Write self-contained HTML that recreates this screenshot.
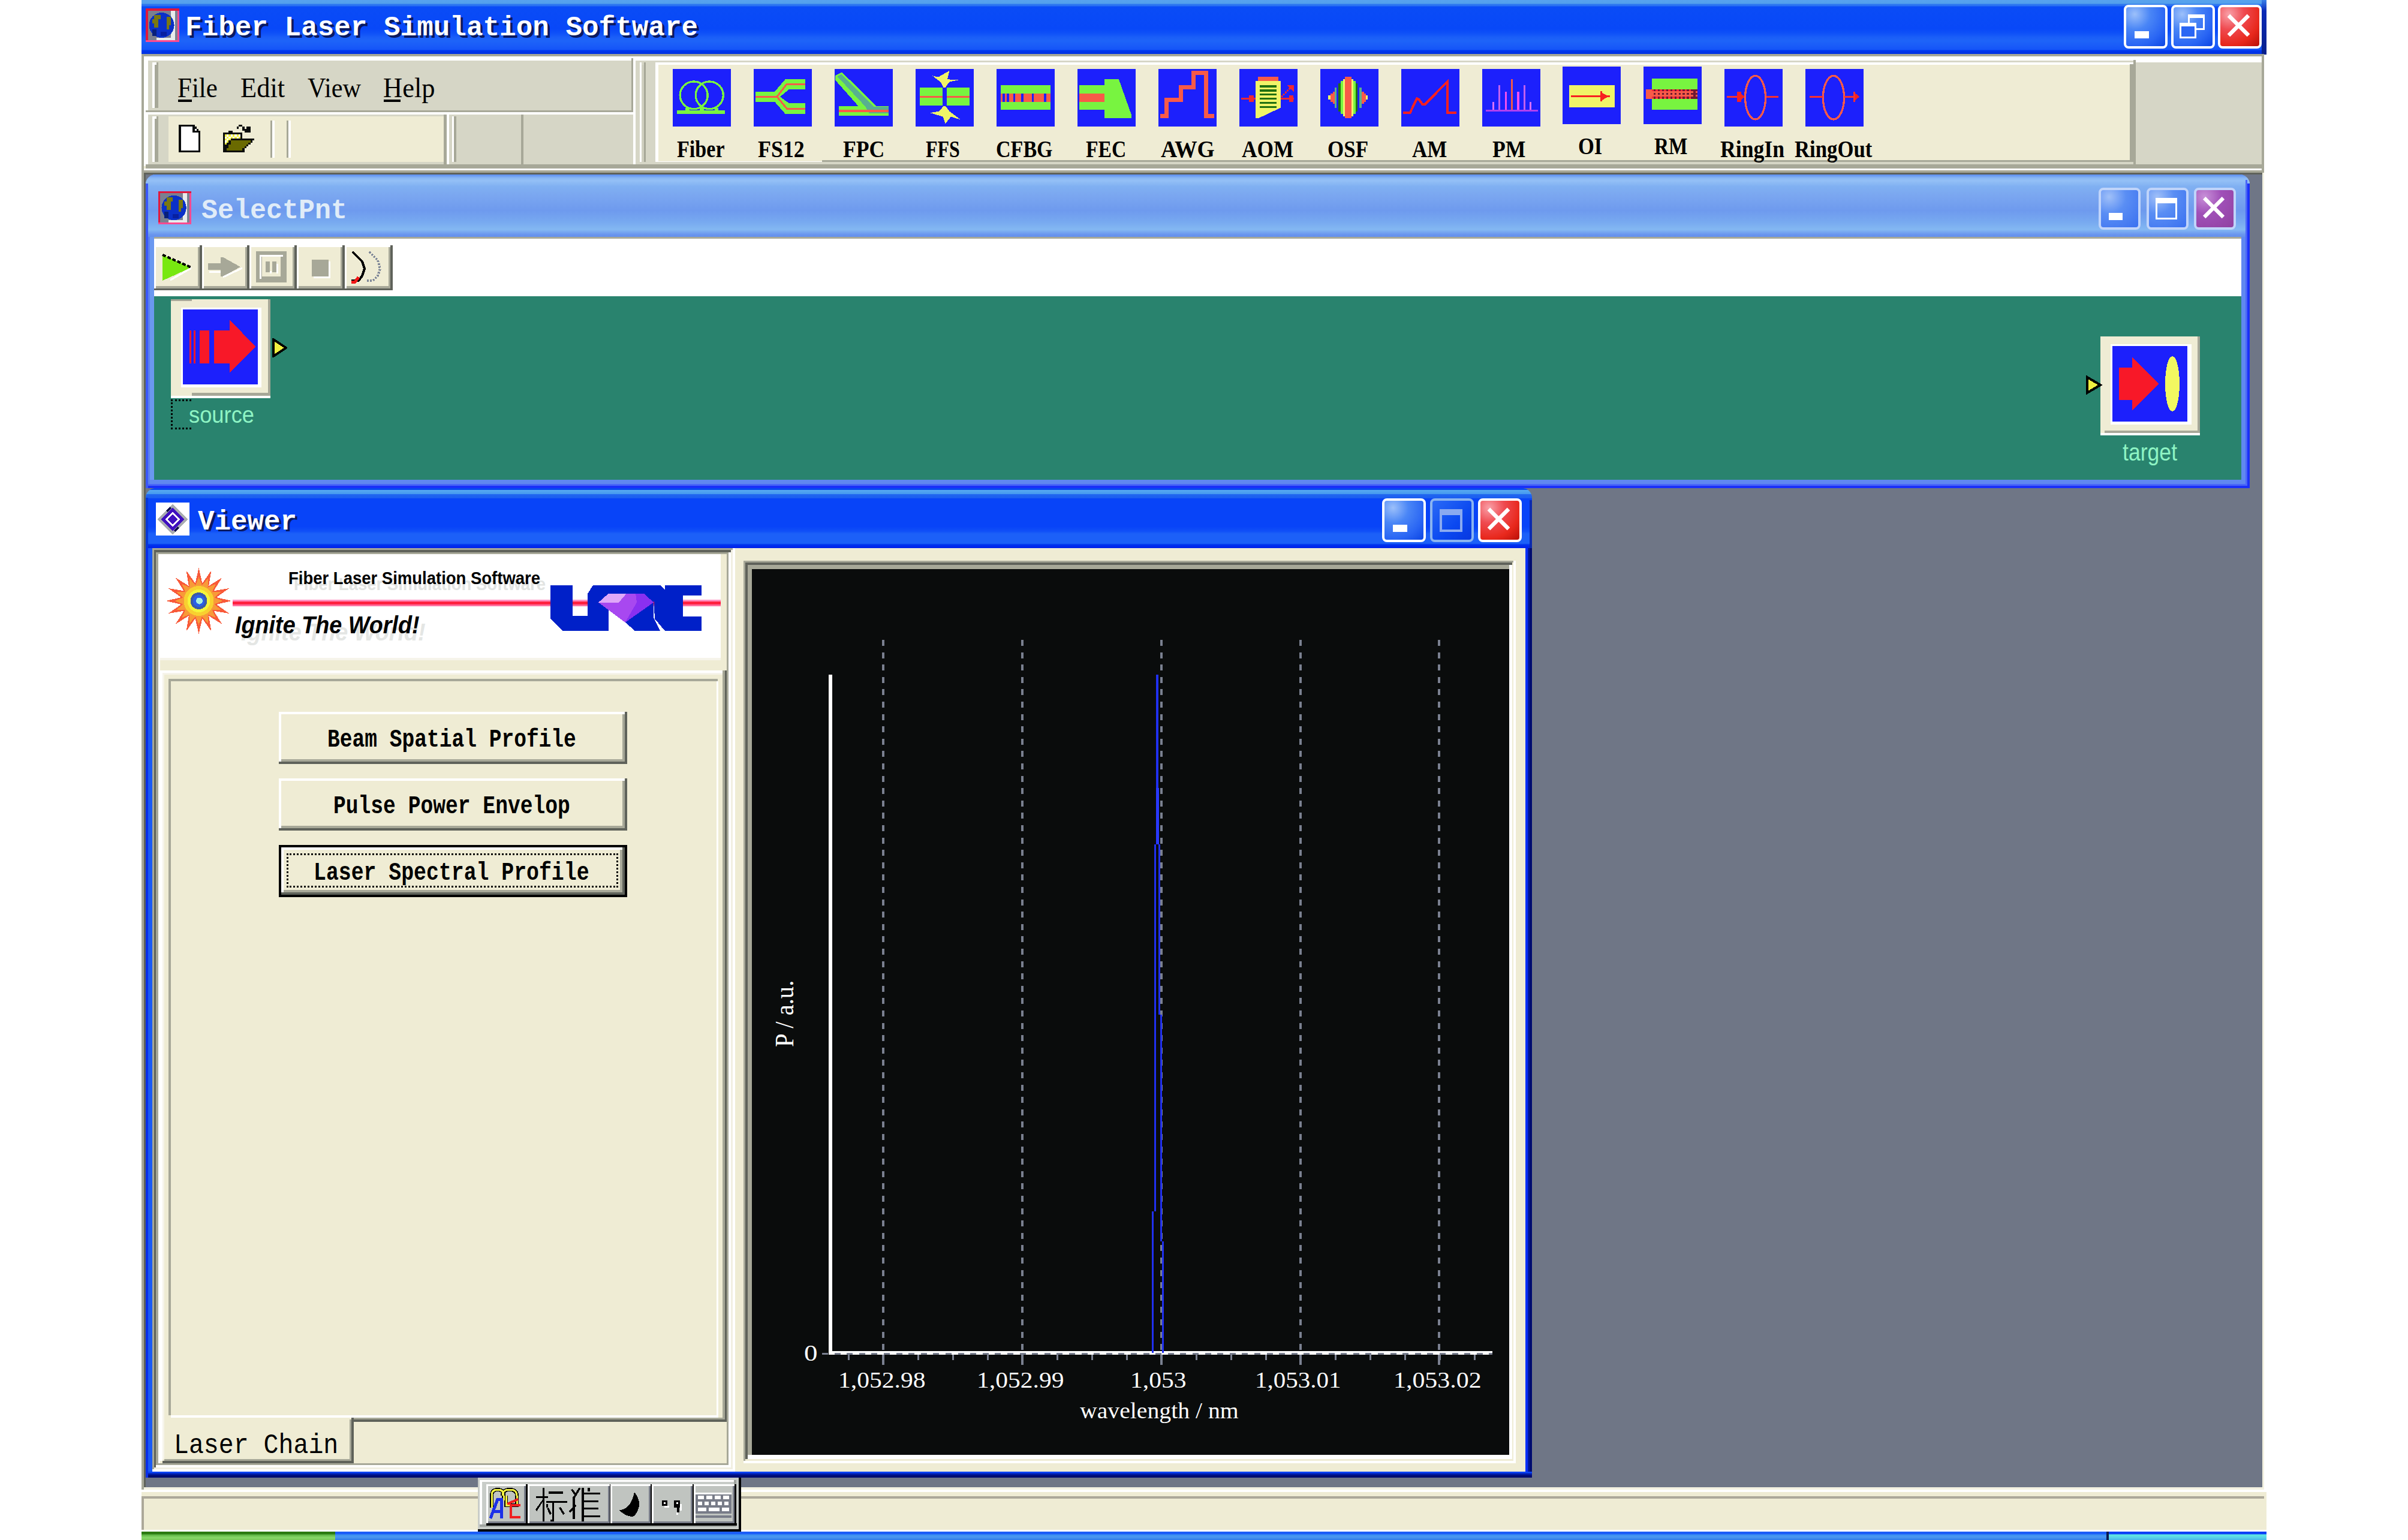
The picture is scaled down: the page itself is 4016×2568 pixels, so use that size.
<!DOCTYPE html>
<html><head><meta charset="utf-8"><style>*{margin:0;padding:0;box-sizing:border-box}
html,body{width:4016px;height:2568px;overflow:hidden;background:#fff;position:relative}
div,svg{position:absolute}
svg{shape-rendering:crispEdges}
</style></head><body>
<div style="left:236px;top:0px;width:3544px;height:91px;background:linear-gradient(to bottom,#58a2ee 0px,#52a0ec 6px,#2e78f0 7px,#2a70f2 10px,#0a4cf6 11px,#0848f8 48px,#0e50f8 55px,#1a5ef8 62px,#1e64f8 68px,#1a5cf8 76px,#1454f8 83px,#0038f0 84px,#0034e8 87px,#0030e0 91px);"></div>
<div style="left:3772px;top:0px;width:8px;height:91px;background:linear-gradient(to bottom,#3a80e8,#0a2ab8 20%,#08208a);"></div>
<svg style="left:243px;top:14px" width="56" height="56" viewBox="0 0 16 16"><rect x="0" y="0" width="16" height="16" fill="#e0183c"/><rect x="1" y="1" width="14" height="14" fill="#7a8090"/>
<path d="M12 1h2v14h-9v-1h7z" fill="#e8ecec"/><rect x="15" y="1" width="1" height="15" fill="#ff4a90"/><rect x="0" y="15" width="16" height="1" fill="#ff4a90"/>
<circle cx="7.6" cy="8" r="6" fill="#0a30c8"/><path d="M4 3h3v2h-1v4h-2v-2h-1v-2h1z" fill="#7a7810"/><path d="M10 4h2v4h-1v2h-1z" fill="#7a7810"/><path d="M3 10h2v3h-2z" fill="#08207a"/><path d="M7 11h3v2h-3z" fill="#0820a0"/></svg>
<div style="transform:scaleX(0.9770);left:309.07px;top:22.94px;font-family:'Liberation Mono',monospace;font-size:47.06px;line-height:47.06px;font-weight:bold;color:#fff;white-space:pre;transform-origin:0 0;text-shadow:4px 4px 0 #0a1a60;">Fiber Laser Simulation Software</div>
<div style="left:3542px;top:8px;width:73px;height:73px;border:4px solid #fff;border-radius:8px;background:radial-gradient(circle at 22% 18%,#9cc0fa 0%,#4a86f6 35%,#2a66f4 70%,#0c46e4 100%)"></div>
<div style="left:3560px;top:52px;width:24px;height:12px;background:#fff;"></div>
<div style="left:3621px;top:8px;width:73px;height:73px;border:4px solid #fff;border-radius:8px;background:radial-gradient(circle at 22% 18%,#9cc0fa 0%,#4a86f6 35%,#2a66f4 70%,#0c46e4 100%)"></div>
<div style="left:3649px;top:24px;width:28px;height:26px;border:3px solid #fff;border-top-width:6px"></div>
<div style="left:3635px;top:38px;width:28px;height:26px;border:3px solid #fff;border-top-width:6px;background:#2a66f4"></div>
<div style="left:3699px;top:8px;width:73px;height:73px;border:4px solid #fff;border-radius:8px;background:radial-gradient(circle at 22% 18%,#f9a0a8 0%,#ef4a50 35%,#e8281c 70%,#b81008 100%)"></div>
<svg style="left:3699px;top:8px" width="73" height="73" viewBox="0 0 72 72"><path d="M20 20 L48 48 M48 20 L20 48" stroke="#fff" stroke-width="6.5" stroke-linecap="square" fill="none" style="shape-rendering:auto"/></svg>
<div style="left:236px;top:90px;width:3540px;height:2394px;background:#efecd4;"></div>
<div style="left:236px;top:90px;width:4px;height:2394px;background:#a7a898;"></div>
<div style="left:236px;top:90px;width:3540px;height:4px;background:#a7a898;"></div>
<div style="left:240px;top:94px;width:3532px;height:7px;background:#fff;"></div>
<div style="left:240px;top:94px;width:7px;height:183px;background:#fff;"></div>
<div style="left:3773px;top:287px;width:3px;height:2197px;background:#f2f0e0;"></div>
<div style="left:247px;top:101px;width:807px;height:84px;background:#d6d6c6;"></div>
<div style="left:243px;top:184px;width:813px;height:3px;background:#a7a898;"></div>
<div style="left:1053px;top:97px;width:3px;height:91px;background:#a7a898;"></div>
<div style="left:1056px;top:94px;width:4px;height:183px;background:#fff;"></div>
<div style="left:240px;top:187px;width:816px;height:4px;background:#fff;"></div>
<div style="left:254px;top:104px;width:4px;height:76px;background:#fff;"></div>
<div style="left:258px;top:104px;width:6px;height:76px;background:#a7a898;"></div>
<div style="left:258px;top:104px;width:3px;height:4px;background:#fff;"></div>
<div style="transform:scaleX(0.9076);left:296.09px;top:123.35px;font-family:'Liberation Serif',serif;font-size:47.34px;line-height:47.34px;font-weight:normal;color:#000;white-space:pre;transform-origin:0 0;">File</div>
<div style="transform:scaleX(0.9392);left:401.06px;top:123.35px;font-family:'Liberation Serif',serif;font-size:47.34px;line-height:47.34px;font-weight:normal;color:#000;white-space:pre;transform-origin:0 0;">Edit</div>
<div style="transform:scaleX(0.8945);left:513.00px;top:123.35px;font-family:'Liberation Serif',serif;font-size:47.34px;line-height:47.34px;font-weight:normal;color:#000;white-space:pre;transform-origin:0 0;">View</div>
<div style="transform:scaleX(0.9403);left:639.06px;top:123.35px;font-family:'Liberation Serif',serif;font-size:47.34px;line-height:47.34px;font-weight:normal;color:#000;white-space:pre;transform-origin:0 0;">Help</div>
<div style="left:297px;top:166px;width:23px;height:4px;background:#000;"></div>
<div style="left:640px;top:166px;width:28px;height:4px;background:#000;"></div>
<div style="left:247px;top:191px;width:809px;height:83px;background:#d6d6c6;"></div>
<div style="left:281px;top:194px;width:459px;height:76px;background:#efecd4;"></div>
<div style="left:254px;top:194px;width:4px;height:76px;background:#fff;"></div>
<div style="left:258px;top:194px;width:6px;height:76px;background:#a7a898;"></div>
<div style="left:258px;top:194px;width:3px;height:4px;background:#fff;"></div>
<div style="left:740px;top:191px;width:5px;height:83px;background:#a7a898;"></div>
<div style="left:745px;top:191px;width:4px;height:83px;background:#fff;"></div>
<div style="left:754px;top:194px;width:3px;height:76px;background:#fff;"></div>
<div style="left:757px;top:194px;width:4px;height:76px;background:#a7a898;"></div>
<div style="left:869px;top:191px;width:4px;height:83px;background:#a7a898;"></div>
<svg style="left:298px;top:208px" width="40" height="46" viewBox="0 0 12 14"><path d="M0 0 H8 V1 H9 V2 H10 V3 H11 V14 H0 Z" fill="#0a0c0c"/><path d="M1 1 H7 V4 H10 V13 H1 Z" fill="#fff"/><rect x="8" y="2" width="1" height="1" fill="#fff"/></svg>
<svg style="left:371px;top:208px" width="57" height="46" viewBox="0 0 17 14"><path d="M1 4 H3 V3 H5 V4 H10 V7 H16 V8 H15 V9 H14 V10 H13 V11 H12 V12 H11 V14 H0 V4 Z" fill="#0a0c0c"/>
<path d="M1 5 H9 V7 H4 V8 H3 V9 H2 V10 H1 Z" fill="#f0f040"/><path d="M2 5 H3 V6 H2 Z M4 5 H5 V6 H4 Z M6 5 H7 V6 H6 Z M8 5 H9 V6 H8 Z M1 6 H2 V7 H1 Z M3 6 H4 V7 H3 Z M5 6 H6 V7 H5 Z M7 6 H8 V7 H7 Z M2 7 H3 V8 H2 Z M1 8 H2 V9 H1 Z" fill="#fff"/>
<path d="M4 8 H14 V9 H13 V10 H12 V11 H11 V12 H10 V13 H2 V12 H3 V10 H4 Z" fill="#6a6a00"/><path d="M8 0 H10 V1 H11 V2 H12 V1 H14 V4 H11 V3 H10 V1 H8 V2 H7 V1 H8 Z" fill="#0a0c0c"/></svg>
<div style="left:451px;top:201px;width:3px;height:62px;background:#a7a898;"></div>
<div style="left:454px;top:201px;width:4px;height:62px;background:#fff;"></div>
<div style="left:478px;top:201px;width:3px;height:62px;background:#a7a898;"></div>
<div style="left:481px;top:201px;width:4px;height:62px;background:#fff;"></div>
<div style="left:243px;top:274px;width:3530px;height:7px;background:#a7a898;"></div>
<div style="left:240px;top:281px;width:3533px;height:3px;background:#fff;"></div>
<div style="left:240px;top:284px;width:3533px;height:4px;background:#a7a898;"></div>
<div style="left:240px;top:288px;width:3533px;height:3px;background:#5f625a;"></div>
<div style="left:1060px;top:101px;width:2712px;height:173px;background:#d6d6c6;"></div>
<div style="left:1067px;top:104px;width:3px;height:166px;background:#fff;"></div>
<div style="left:1070px;top:108px;width:4px;height:162px;background:#d0d0c0;"></div>
<div style="left:1074px;top:104px;width:3px;height:166px;background:#a7a898;"></div>
<div style="left:1093px;top:104px;width:2465px;height:166px;background:#fff;"></div>
<div style="left:1098px;top:108px;width:2454px;height:161px;background:#efecd4;"></div>
<div style="left:3552px;top:107px;width:6px;height:167px;background:#a7a898;"></div>
<div style="left:1371px;top:267px;width:2187px;height:3px;background:#a7a898;"></div>
<div style="left:1093px;top:270px;width:2465px;height:4px;background:#d6d6c6;"></div>
<div style="left:3558px;top:100px;width:4px;height:174px;background:#a7a898;"></div>
<div style="left:3562px;top:100px;width:210px;height:4px;background:#fff;"></div>
<div style="left:3772px;top:94px;width:4px;height:194px;background:#a7a898;"></div>
<div style="left:240px;top:291px;width:3533px;height:2189px;background:#6f7686;"></div>
<div style="left:240px;top:291px;width:3px;height:2189px;background:#5f625a;"></div>
<div style="left:240px;top:2480px;width:3536px;height:4px;background:#f4f2e2;"></div>
<div style="left:240px;top:2484px;width:3536px;height:4px;background:#fff;"></div>
<div style="left:236px;top:2488px;width:3544px;height:66px;background:#efecd4;"></div>
<div style="left:240px;top:2495px;width:3536px;height:4px;background:#aca899;"></div>
<div style="left:236px;top:2495px;width:4px;height:56px;background:#aca899;"></div>
<div style="left:236px;top:2551px;width:3544px;height:3px;background:#fff;"></div>
<div style="left:236px;top:2554px;width:3544px;height:14px;background:linear-gradient(to bottom,#1a5cf8 0px,#1a5cf8 4px,#3a8ef0 5px,#4a98f0 9px,#2e7ae8 14px);"></div>
<div style="left:236px;top:2554px;width:323px;height:14px;background:linear-gradient(to bottom,#2a7a10 0px,#2a7a10 4px,#58b040 5px,#88d868 10px,#78c858 14px);"></div>
<div style="left:3513px;top:2554px;width:4px;height:14px;background:#0a1a50;"></div>
<div style="left:3517px;top:2554px;width:263px;height:14px;background:linear-gradient(to bottom,#0a40f8 0px,#0a40f8 4px,#60e8e0 5px,#5ad8e8 9px,#48b8e8 14px);"></div>
<svg style="left:1122px;top:115px" width="97" height="96" viewBox="0 0 32 32" preserveAspectRatio="none"><rect width="32" height="32" fill="#1c20fc"/><circle cx="11.6" cy="14.6" r="7.6" fill="none" stroke="#78f440" stroke-width="1.1"/><circle cx="20.2" cy="14.6" r="7.6" fill="none" stroke="#78f440" stroke-width="1.1"/><rect x="2.3" y="22.9" width="26.4" height="2.200000000000003" fill="#78f440"/><rect x="7" y="21.5" width="2.1999999999999993" height="1.5" fill="#78f440"/><rect x="15" y="21.5" width="2.1999999999999993" height="1.5" fill="#78f440"/><rect x="23" y="21.5" width="2.1999999999999993" height="1.5" fill="#78f440"/></svg>
<svg style="left:1257px;top:115px" width="97" height="96" viewBox="0 0 32 32" preserveAspectRatio="none"><rect width="32" height="32" fill="#1c20fc"/><path d="M0.9 12.7 H11.5 L17.5 5.6 H28.4 V11.3 H19.5 L14.5 15.45 L19.5 19.1 H28.4 V25.1 H17.5 L11.5 18.2 H0.9 Z" fill="#78f440"/><path d="M0.9 15.4 H12.8 L18.2 8.4 H28.4 M12.8 15.4 L18.2 22 H28.4" fill="none" stroke="#f85a48" stroke-width="1"/></svg>
<svg style="left:1392px;top:115px" width="97" height="96" viewBox="0 0 32 32" preserveAspectRatio="none"><rect width="32" height="32" fill="#1c20fc"/><path d="M0.2 3.8 L4 1.8 L23 20.6 H29.7 V26 H2.3 V20.6 H13 L0.2 6 Z" fill="#78f440"/><path d="M1.5 4.2 L3.8 2.9 L21.5 21 H29.6 V24.8 H19 L17 21 Z" fill="#58b090"/><rect x="2.3" y="22.8" width="27.4" height="1.0999999999999979" fill="#f85a48"/></svg>
<svg style="left:1527px;top:115px" width="97" height="96" viewBox="0 0 32 32" preserveAspectRatio="none"><rect width="32" height="32" fill="#1c20fc"/><rect x="2.2" y="10.2" width="12.600000000000001" height="10.2" fill="#78f440"/><rect x="17.1" y="10.2" width="12.599999999999998" height="10.2" fill="#78f440"/><rect x="2.2" y="15" width="12.600000000000001" height="0.9000000000000004" fill="#f85a48"/><rect x="17.1" y="15" width="12.599999999999998" height="0.9000000000000004" fill="#f85a48"/><path d="M9.3 3.8 L12.5 4.5 L18.6 1.0 L17.5 5.8 L24.1 6.0 L18.6 7.2 L16.4 10.2 H15.2 L14 7.5 Z" fill="#f0f468"/><path d="M8 24.4 L13 23.5 L15.4 20.6 H16.4 L18.6 23.5 L24.8 28.2 L19.4 26.5 L16.4 30.5 L15 26.5 Z" fill="#f0f468"/></svg>
<svg style="left:1662px;top:115px" width="97" height="96" viewBox="0 0 32 32" preserveAspectRatio="none"><rect width="32" height="32" fill="#1c20fc"/><rect x="2.3" y="9" width="27.4" height="13.8" fill="#78f440"/><rect x="2.3" y="13.6" width="27.4" height="4.6" fill="#f85a48"/><rect x="3.3" y="13.6" width="1.2999999999999998" height="4.6" fill="#1c20fc"/><rect x="5.6" y="13.6" width="1.3000000000000007" height="4.6" fill="#1c20fc"/><rect x="9.2" y="13.6" width="0.9000000000000004" height="4.6" fill="#1c20fc"/><rect x="13.6" y="13.6" width="1.200000000000001" height="4.6" fill="#1c20fc"/><rect x="19.4" y="13.6" width="1.0" height="4.6" fill="#1c20fc"/><rect x="26" y="13.6" width="1.3000000000000007" height="4.6" fill="#1c20fc"/></svg>
<svg style="left:1797px;top:115px" width="97" height="96" viewBox="0 0 32 32" preserveAspectRatio="none"><rect width="32" height="32" fill="#1c20fc"/><rect x="0.9" y="9" width="14.0" height="13.8" fill="#78f440"/><path d="M14.9 5.6 H22.7 L29.6 25.3 V27.4 H14.9 Z" fill="#78f440"/><rect x="0.9" y="13.6" width="14.0" height="4.6" fill="#f85a48"/></svg>
<svg style="left:1932px;top:115px" width="97" height="96" viewBox="0 0 32 32" preserveAspectRatio="none"><rect width="32" height="32" fill="#1c20fc"/><rect x="0.95" y="25.1" width="4.55" height="2.299999999999997" fill="#f85a48"/><rect x="3.3" y="16" width="2.2" height="11.399999999999999" fill="#f85a48"/><rect x="3.3" y="16" width="10.100000000000001" height="2.1999999999999993" fill="#f85a48"/><rect x="11.2" y="9" width="2.200000000000001" height="9.2" fill="#f85a48"/><rect x="11.2" y="9" width="9.100000000000001" height="2.3000000000000007" fill="#f85a48"/><rect x="18.1" y="1.1" width="2.1999999999999993" height="10.200000000000001" fill="#f85a48"/><rect x="18.1" y="1.1" width="9.2" height="2.3" fill="#f85a48"/><rect x="25" y="1.1" width="2.3000000000000007" height="26.299999999999997" fill="#f85a48"/><rect x="25" y="25.1" width="5.600000000000001" height="2.299999999999997" fill="#f85a48"/></svg>
<svg style="left:2067px;top:115px" width="97" height="96" viewBox="0 0 32 32" preserveAspectRatio="none"><rect width="32" height="32" fill="#1c20fc"/><rect x="10.2" y="4.4" width="11.3" height="2.1999999999999993" fill="#f85a48"/><path d="M9 6.5 H22.8 V21.5 L10.5 27.4 H9 Z" fill="#f0f468"/><rect x="11.3" y="9" width="9.099999999999998" height="1.1999999999999993" fill="#207010"/><rect x="11.3" y="11.3" width="9.099999999999998" height="1.1999999999999993" fill="#207010"/><rect x="11.3" y="13.6" width="9.099999999999998" height="1.200000000000001" fill="#207010"/><rect x="11.3" y="15.9" width="9.099999999999998" height="1.0999999999999996" fill="#207010"/><rect x="11.3" y="18.2" width="9.099999999999998" height="1.1000000000000014" fill="#207010"/><rect x="11.3" y="20.5" width="9.099999999999998" height="1.1000000000000014" fill="#207010"/><rect x="0.9" y="15.9" width="8.1" height="1.0999999999999996" fill="#f02830"/><rect x="5.4" y="14.8" width="2.5999999999999996" height="3.3999999999999986" fill="#f02830"/><rect x="22.8" y="15.9" width="7.199999999999999" height="1.0999999999999996" fill="#f02830"/><rect x="27.3" y="14.8" width="2.5" height="3.3999999999999986" fill="#f02830"/><path d="M23 15.5 L28.5 10.2" stroke="#f02830" stroke-width="1" stroke-dasharray="1 0.5"/><path d="M26.2 9 H30 V12.8 Z" fill="#f02830"/></svg>
<svg style="left:2202px;top:115px" width="97" height="96" viewBox="0 0 32 32" preserveAspectRatio="none"><rect width="32" height="32" fill="#1c20fc"/><rect x="4.2" y="14.8" width="1.2999999999999998" height="2.1999999999999993" fill="#f0f468"/><rect x="5.5" y="13.6" width="1.2999999999999998" height="4.6" fill="#f85a48"/><rect x="6.8" y="12.5" width="1.1000000000000005" height="6.800000000000001" fill="#f85a48"/><rect x="7.9" y="10.2" width="1.0999999999999996" height="11.3" fill="#58b090"/><rect x="10" y="8" width="1.3000000000000007" height="15.8" fill="#207010"/><rect x="11.3" y="6.6" width="1.299999999999999" height="18.4" fill="#78f440"/><rect x="12.6" y="5.5" width="0.9000000000000004" height="20.7" fill="#f0f468"/><rect x="13.5" y="4.4" width="3.6000000000000014" height="23.0" fill="#f85a48"/><rect x="17.1" y="5.5" width="1.0999999999999979" height="20.7" fill="#f0f468"/><rect x="18.2" y="6.6" width="1.1000000000000014" height="18.4" fill="#78f440"/><rect x="19.3" y="8" width="1.3000000000000007" height="15.8" fill="#207010"/><rect x="21.5" y="10.2" width="1.3000000000000007" height="11.3" fill="#58b090"/><rect x="22.8" y="12.5" width="1.1999999999999993" height="6.800000000000001" fill="#f85a48"/><rect x="24" y="13.6" width="1.1000000000000014" height="4.6" fill="#f85a48"/><rect x="25.1" y="14.8" width="0.8999999999999986" height="2.1999999999999993" fill="#f0f468"/></svg>
<svg style="left:2337px;top:115px" width="97" height="96" viewBox="0 0 32 32" preserveAspectRatio="none"><rect width="32" height="32" fill="#1c20fc"/><path d="M0.9 24.4 H4.8 L8.6 16.4 L9.8 17 L11.6 19.6 H13.1 L25.5 6.9 V24.4 H30.5" fill="none" stroke="#f82020" stroke-width="1.3"/></svg>
<svg style="left:2472px;top:115px" width="97" height="96" viewBox="0 0 32 32" preserveAspectRatio="none"><rect width="32" height="32" fill="#1c20fc"/><rect x="2" y="22.8" width="28.6" height="1.0" fill="#b040f0"/><rect x="5.5" y="18.2" width="1.0" height="4.600000000000001" fill="#d870f8"/><rect x="26" y="18.2" width="1.1000000000000014" height="4.600000000000001" fill="#d870f8"/><rect x="8.9" y="9" width="1.0999999999999996" height="13.8" fill="#c060f0"/><rect x="22.8" y="9" width="1.0" height="13.8" fill="#c060f0"/><rect x="12.4" y="12.6" width="1.0999999999999996" height="10.200000000000001" fill="#f050f0"/><rect x="19.1" y="12.6" width="1.1999999999999993" height="10.200000000000001" fill="#f050f0"/><rect x="15.7" y="5.6" width="1.0" height="17.200000000000003" fill="#f05848"/></svg>
<svg style="left:2606px;top:111px" width="97" height="96" viewBox="0 0 32 32" preserveAspectRatio="none"><rect width="32" height="32" fill="#1c20fc"/><rect x="3.6" y="10.2" width="25.099999999999998" height="12.5" fill="#f0f468"/><rect x="4.7" y="16.1" width="21.5" height="1.0" fill="#f82020"/><rect x="20.7" y="13.8" width="1.1000000000000014" height="5.599999999999998" fill="#f82020"/><path d="M21.5 14.5 L25.5 16.6 L21.5 18.8 Z" fill="#f82020"/></svg>
<svg style="left:2741px;top:111px" width="97" height="96" viewBox="0 0 32 32" preserveAspectRatio="none"><rect width="32" height="32" fill="#1c20fc"/><rect x="4.6" y="6.8" width="25.1" height="17.2" fill="#78f440"/><rect x="1.2" y="12.5" width="28.5" height="5.5" fill="#f85a48"/><rect x="4.6" y="12.6" width="25.1" height="1.0" fill="#f82838"/><rect x="4.6" y="16.8" width="25.1" height="1.0" fill="#f82838"/><rect x="5.5" y="12.6" width="1.1" height="1.1" fill="#701830"/><rect x="5.5" y="14.7" width="1.1" height="1.1" fill="#701830"/><rect x="5.5" y="16.8" width="1.1" height="1.1" fill="#701830"/><rect x="7.8" y="12.6" width="1.1" height="1.1" fill="#701830"/><rect x="7.8" y="14.7" width="1.1" height="1.1" fill="#701830"/><rect x="7.8" y="16.8" width="1.1" height="1.1" fill="#701830"/><rect x="10.1" y="12.6" width="1.1" height="1.1" fill="#701830"/><rect x="10.1" y="14.7" width="1.1" height="1.1" fill="#701830"/><rect x="10.1" y="16.8" width="1.1" height="1.1" fill="#701830"/><rect x="12.399999999999999" y="12.6" width="1.1" height="1.1" fill="#701830"/><rect x="12.399999999999999" y="14.7" width="1.1" height="1.1" fill="#701830"/><rect x="12.399999999999999" y="16.8" width="1.1" height="1.1" fill="#701830"/><rect x="14.7" y="12.6" width="1.1" height="1.1" fill="#701830"/><rect x="14.7" y="14.7" width="1.1" height="1.1" fill="#701830"/><rect x="14.7" y="16.8" width="1.1" height="1.1" fill="#701830"/><rect x="17.0" y="12.6" width="1.1" height="1.1" fill="#701830"/><rect x="17.0" y="14.7" width="1.1" height="1.1" fill="#701830"/><rect x="17.0" y="16.8" width="1.1" height="1.1" fill="#701830"/><rect x="19.299999999999997" y="12.6" width="1.1" height="1.1" fill="#701830"/><rect x="19.299999999999997" y="14.7" width="1.1" height="1.1" fill="#701830"/><rect x="19.299999999999997" y="16.8" width="1.1" height="1.1" fill="#701830"/><rect x="21.599999999999998" y="12.6" width="1.1" height="1.1" fill="#701830"/><rect x="21.599999999999998" y="14.7" width="1.1" height="1.1" fill="#701830"/><rect x="21.599999999999998" y="16.8" width="1.1" height="1.1" fill="#701830"/><rect x="23.9" y="12.6" width="1.1" height="1.1" fill="#701830"/><rect x="23.9" y="14.7" width="1.1" height="1.1" fill="#701830"/><rect x="23.9" y="16.8" width="1.1" height="1.1" fill="#701830"/><rect x="26.2" y="12.6" width="1.1" height="1.1" fill="#701830"/><rect x="26.2" y="14.7" width="1.1" height="1.1" fill="#701830"/><rect x="26.2" y="16.8" width="1.1" height="1.1" fill="#701830"/><rect x="28.5" y="12.6" width="1.1" height="1.1" fill="#701830"/><rect x="28.5" y="14.7" width="1.1" height="1.1" fill="#701830"/><rect x="28.5" y="16.8" width="1.1" height="1.1" fill="#701830"/><rect x="27.5" y="12.5" width="1.1000000000000014" height="5.5" fill="#701830"/></svg>
<svg style="left:2876px;top:115px" width="97" height="96" viewBox="0 0 32 32" preserveAspectRatio="none"><rect width="32" height="32" fill="#1c20fc"/><ellipse cx="17" cy="15.9" rx="5.6" ry="12.1" fill="none" stroke="#f85a48" stroke-width="1.1"/><rect x="1.2" y="14.9" width="9.8" height="1.0" fill="#f83030"/><rect x="23" y="14.9" width="6.699999999999999" height="1.0" fill="#f83030"/><rect x="7" y="12.6" width="2.1999999999999993" height="5.6" fill="#f82020"/><path d="M9 13.5 L11 15.4 L9 17.3 Z" fill="#f82020"/></svg>
<svg style="left:3011px;top:115px" width="97" height="96" viewBox="0 0 32 32" preserveAspectRatio="none"><rect width="32" height="32" fill="#1c20fc"/><ellipse cx="15.5" cy="15.9" rx="5.8" ry="12.1" fill="none" stroke="#f85a48" stroke-width="1.1"/><rect x="2.3" y="14.9" width="7.3" height="1.0" fill="#f83030"/><rect x="21.4" y="14.9" width="7.600000000000001" height="1.0" fill="#f83030"/><rect x="26.4" y="12.6" width="1.1000000000000014" height="5.6" fill="#f83030"/><path d="M27.4 13.5 L29.8 15.4 L27.4 17.3 Z" fill="#f82020"/></svg>
<div style="transform:scaleX(0.8588);left:1129.00px;top:229.75px;font-family:'Liberation Serif',serif;font-size:39.71px;line-height:39.71px;font-weight:bold;color:#000;white-space:pre;transform-origin:0 0;">Fiber</div>
<div style="transform:scaleX(0.9039);left:1264.00px;top:229.75px;font-family:'Liberation Serif',serif;font-size:39.71px;line-height:39.71px;font-weight:bold;color:#000;white-space:pre;transform-origin:0 0;">FS12</div>
<div style="transform:scaleX(0.8993);left:1406.00px;top:229.75px;font-family:'Liberation Serif',serif;font-size:39.71px;line-height:39.71px;font-weight:bold;color:#000;white-space:pre;transform-origin:0 0;">FPC</div>
<div style="transform:scaleX(0.8057);left:1544.00px;top:229.75px;font-family:'Liberation Serif',serif;font-size:39.71px;line-height:39.71px;font-weight:bold;color:#000;white-space:pre;transform-origin:0 0;">FFS</div>
<div style="transform:scaleX(0.8579);left:1661.14px;top:229.75px;font-family:'Liberation Serif',serif;font-size:39.71px;line-height:39.71px;font-weight:bold;color:#000;white-space:pre;transform-origin:0 0;">CFBG</div>
<div style="transform:scaleX(0.8471);left:1811.00px;top:229.75px;font-family:'Liberation Serif',serif;font-size:39.71px;line-height:39.71px;font-weight:bold;color:#000;white-space:pre;transform-origin:0 0;">FEC</div>
<div style="transform:scaleX(0.9471);left:1936.00px;top:229.75px;font-family:'Liberation Serif',serif;font-size:39.71px;line-height:39.71px;font-weight:bold;color:#000;white-space:pre;transform-origin:0 0;">AWG</div>
<div style="transform:scaleX(0.8907);left:2071.00px;top:229.75px;font-family:'Liberation Serif',serif;font-size:39.71px;line-height:39.71px;font-weight:bold;color:#000;white-space:pre;transform-origin:0 0;">AOM</div>
<div style="transform:scaleX(0.8804);left:2214.12px;top:229.75px;font-family:'Liberation Serif',serif;font-size:39.71px;line-height:39.71px;font-weight:bold;color:#000;white-space:pre;transform-origin:0 0;">OSF</div>
<div style="transform:scaleX(0.8832);left:2355.00px;top:229.75px;font-family:'Liberation Serif',serif;font-size:39.71px;line-height:39.71px;font-weight:bold;color:#000;white-space:pre;transform-origin:0 0;">AM</div>
<div style="transform:scaleX(0.8979);left:2489.00px;top:229.75px;font-family:'Liberation Serif',serif;font-size:39.71px;line-height:39.71px;font-weight:bold;color:#000;white-space:pre;transform-origin:0 0;">PM</div>
<div style="transform:scaleX(0.8689);left:2632.13px;top:224.75px;font-family:'Liberation Serif',serif;font-size:39.71px;line-height:39.71px;font-weight:bold;color:#000;white-space:pre;transform-origin:0 0;">OI</div>
<div style="transform:scaleX(0.8375);left:2759.00px;top:224.75px;font-family:'Liberation Serif',serif;font-size:39.71px;line-height:39.71px;font-weight:bold;color:#000;white-space:pre;transform-origin:0 0;">RM</div>
<div style="transform:scaleX(0.8985);left:2869.00px;top:229.75px;font-family:'Liberation Serif',serif;font-size:39.71px;line-height:39.71px;font-weight:bold;color:#000;white-space:pre;transform-origin:0 0;">RingIn</div>
<div style="transform:scaleX(0.8748);left:2993.00px;top:229.75px;font-family:'Liberation Serif',serif;font-size:39.71px;line-height:39.71px;font-weight:bold;color:#000;white-space:pre;transform-origin:0 0;">RingOut</div>
<div style="left:243px;top:291px;width:3509px;height:522px;background:#6a9af2;"></div>
<div style="left:243px;top:311px;width:4px;height:503px;background:#3a58f8;"></div>
<div style="left:247px;top:311px;width:3px;height:499px;background:#5a80f0;"></div>
<div style="left:250px;top:311px;width:7px;height:496px;background:#6a98f0;"></div>
<div style="left:3738px;top:311px;width:7px;height:496px;background:#6088f0;"></div>
<div style="left:3745px;top:311px;width:3px;height:499px;background:#4a66f8;"></div>
<div style="left:3748px;top:311px;width:4px;height:503px;background:#1a30f8;"></div>
<div style="left:250px;top:800px;width:3495px;height:7px;background:#6088f0;"></div>
<div style="left:247px;top:807px;width:3501px;height:3px;background:#4a66f8;"></div>
<div style="left:247px;top:810px;width:3505px;height:4px;background:#1a30f8;"></div>
<div style="left:243px;top:291px;width:3509px;height:104px;border-radius:16px 16px 0 0;background:linear-gradient(to bottom,#5a8ef2 0px,#8ab8f4 6px,#94c0f6 10px,#80b0f2 20px,#7aa6f0 36px,#6e9aee 60px,#78aaf0 80px,#84b8f2 92px,#6a96ee 100px,#6490ec 104px)"></div>
<div style="left:243px;top:291px;width:12px;height:12px;background:#6f7686;"></div>
<div style="left:3740px;top:291px;width:12px;height:12px;background:#6f7686;"></div>
<div style="left:243px;top:291px;width:3509px;height:104px;border-radius:16px 16px 0 0;background:linear-gradient(to bottom,#5a8ef2 0px,#8ab8f4 6px,#94c0f6 10px,#80b0f2 20px,#7aa6f0 36px,#6e9aee 60px,#78aaf0 80px,#84b8f2 92px,#6a96ee 100px,#6490ec 104px)"></div>
<div style="left:3745px;top:300px;width:3px;height:95px;background:#4a66f8;"></div>
<div style="left:3748px;top:306px;width:4px;height:89px;background:#1a30f8;"></div>
<div style="left:243px;top:306px;width:4px;height:89px;background:#3a58f8;"></div>
<svg style="left:264px;top:319px" width="55" height="55" viewBox="0 0 16 16"><rect x="0" y="0" width="16" height="16" fill="#e0183c"/><rect x="1" y="1" width="14" height="14" fill="#7a8090"/>
<path d="M12 1h2v14h-9v-1h7z" fill="#e8ecec"/><rect x="15" y="1" width="1" height="15" fill="#ff4a90"/><rect x="0" y="15" width="16" height="1" fill="#ff4a90"/>
<circle cx="7.6" cy="8" r="6" fill="#0a30c8"/><path d="M4 3h3v2h-1v4h-2v-2h-1v-2h1z" fill="#7a7810"/><path d="M10 4h2v4h-1v2h-1z" fill="#7a7810"/><path d="M3 10h2v3h-2z" fill="#08207a"/><path d="M7 11h3v2h-3z" fill="#0820a0"/></svg>
<div style="transform:scaleX(0.9565);left:336.00px;top:327.94px;font-family:'Liberation Mono',monospace;font-size:47.06px;line-height:47.06px;font-weight:bold;color:#e0ecf8;white-space:pre;transform-origin:0 0;">SelectPnt</div>
<div style="left:3500px;top:313px;width:70px;height:70px;border:4px solid #c0d4fa;border-radius:8px;background:radial-gradient(circle at 22% 18%,#a0c0f8 0%,#5a8ef4 40%,#3a70f0 100%)"></div>
<div style="left:3517px;top:355px;width:23px;height:12px;background:#fff;"></div>
<div style="left:3580px;top:313px;width:70px;height:70px;border:4px solid #c0d4fa;border-radius:8px;background:radial-gradient(circle at 22% 18%,#a0c0f8 0%,#5a8ef4 40%,#3a70f0 100%)"></div>
<div style="left:3595px;top:330px;width:36px;height:36px;border:3px solid #fff;border-top-width:9px"></div>
<div style="left:3659px;top:313px;width:70px;height:70px;border:4px solid #c0d4fa;border-radius:8px;background:radial-gradient(circle at 22% 18%,#c890d8 0%,#a050b8 40%,#9040a0 100%)"></div>
<svg style="left:3659px;top:313px" width="70" height="70" viewBox="0 0 72 72"><path d="M20 20 L48 48 M48 20 L20 48" stroke="#fff" stroke-width="6.5" stroke-linecap="square" fill="none" style="shape-rendering:auto"/></svg>
<div style="left:257px;top:395px;width:3481px;height:3px;background:#a7a898;"></div>
<div style="left:257px;top:398px;width:3481px;height:96px;background:#fff;"></div>
<div style="left:257px;top:494px;width:3481px;height:306px;background:#29836e;"></div>
<div style="left:257px;top:481px;width:398px;height:3px;background:#5f625a;"></div>
<div style="left:333px;top:409px;width:4px;height:75px;background:#5f625a;"></div>
<div style="left:260px;top:412px;width:70px;height:69px;background:#efecd4;"></div>
<div style="left:330px;top:412px;width:3px;height:69px;background:#a7a898;"></div>
<div style="left:260px;top:477px;width:73px;height:4px;background:#a7a898;"></div>
<div style="left:412px;top:409px;width:4px;height:75px;background:#5f625a;"></div>
<div style="left:340px;top:412px;width:69px;height:69px;background:#efecd4;"></div>
<div style="left:409px;top:412px;width:3px;height:69px;background:#a7a898;"></div>
<div style="left:340px;top:477px;width:72px;height:4px;background:#a7a898;"></div>
<div style="left:491px;top:409px;width:4px;height:75px;background:#5f625a;"></div>
<div style="left:419px;top:412px;width:69px;height:69px;background:#efecd4;"></div>
<div style="left:488px;top:412px;width:3px;height:69px;background:#a7a898;"></div>
<div style="left:419px;top:477px;width:72px;height:4px;background:#a7a898;"></div>
<div style="left:571px;top:409px;width:4px;height:75px;background:#5f625a;"></div>
<div style="left:498px;top:412px;width:70px;height:69px;background:#efecd4;"></div>
<div style="left:568px;top:412px;width:3px;height:69px;background:#a7a898;"></div>
<div style="left:498px;top:477px;width:73px;height:4px;background:#a7a898;"></div>
<div style="left:651px;top:409px;width:4px;height:75px;background:#5f625a;"></div>
<div style="left:578px;top:412px;width:70px;height:69px;background:#efecd4;"></div>
<div style="left:648px;top:412px;width:3px;height:69px;background:#a7a898;"></div>
<div style="left:578px;top:477px;width:73px;height:4px;background:#a7a898;"></div>
<svg style="left:270px;top:423px" width="50" height="46" viewBox="0 0 50 46"><path d="M1 2 L49 23 L1 45 Z" fill="#78e810"/><path d="M1 2 L49 23" stroke="#000" stroke-width="4" stroke-dasharray="6 3"/><path d="M49 24 L14 44" stroke="#fff" stroke-width="3"/></svg>
<svg style="left:346px;top:428px" width="60" height="36" viewBox="0 0 60 36"><path d="M1 11 H22 V1 H26 L55 17 L26 33 H22 V22 H1 Z" fill="#a7a898"/><path d="M3 25 H22 M26 34 L58 19" stroke="#fff" stroke-width="3"/></svg>
<div style="left:427px;top:419px;width:51px;height:52px;background:#a7a898;"></div>
<div style="left:433px;top:425px;width:39px;height:40px;background:#fff;"></div>
<div style="left:436px;top:428px;width:36px;height:37px;background:#a7a898;"></div>
<div style="left:437px;top:428px;width:31px;height:33px;background:#efecd4;"></div>
<div style="left:443px;top:436px;width:7px;height:18px;background:#a7a898;"></div>
<div style="left:454px;top:436px;width:7px;height:18px;background:#a7a898;"></div>
<div style="left:450px;top:452px;width:3px;height:4px;background:#fff;"></div>
<div style="left:461px;top:440px;width:3px;height:16px;background:#fff;"></div>
<div style="left:520px;top:433px;width:28px;height:28px;background:#a7a898;"></div>
<div style="left:523px;top:461px;width:28px;height:3px;background:#fff;"></div>
<div style="left:548px;top:436px;width:3px;height:28px;background:#fff;"></div>
<svg style="left:584px;top:418px" width="60" height="56" viewBox="0 0 60 56"><path d="M4 2 L20 18 L24 30 L20 42 L14 50 H2" fill="none" stroke="#000" stroke-width="4"/><path d="M14 44 L8 52 H2" fill="none" stroke="#f01818" stroke-width="5"/><path d="M32 2 L46 16 L50 30 L46 42 L38 50 H28" fill="none" stroke="#808898" stroke-width="4" stroke-dasharray="3 2"/></svg>
<div style="left:285px;top:499px;width:166px;height:165px;background:#efecd4;"></div>
<div style="left:285px;top:499px;width:35px;height:3px;background:#a7a898;"></div>
<div style="left:447px;top:499px;width:4px;height:161px;background:#a7a898;"></div>
<div style="left:320px;top:655px;width:131px;height:5px;background:#a7a898;"></div>
<div style="left:285px;top:660px;width:166px;height:4px;background:#fff;"></div>
<div style="left:302px;top:513px;width:134px;height:133px;background:#fff;"></div>
<div style="left:305px;top:516px;width:125px;height:125px;background:#1c20fc;"></div>
<svg style="left:305px;top:516px" width="125" height="125" viewBox="0 0 125 125"><rect x="11" y="35" width="3" height="55" fill="#f81828"/><rect x="18" y="35" width="3" height="55" fill="#f81828"/><rect x="28" y="35" width="16" height="55" fill="#f81828"/><path d="M52 35 H78 V17 L121 62 L78 106 V90 H52 Z" fill="#f81828"/></svg>
<svg style="left:454px;top:564px" width="25" height="32" viewBox="0 0 25 32"><path d="M2 2 L23 16 L2 30 Z" fill="#f0f040" stroke="#000" stroke-width="4"/></svg>
<div style="transform:scaleX(0.9590);left:315.04px;top:673.95px;font-family:'Liberation Sans',sans-serif;font-size:37.86px;line-height:37.86px;font-weight:normal;color:#8ef4c4;white-space:pre;transform-origin:0 0;">source</div>
<div style="left:285px;top:666px;width:34px;height:50px;border-left:3px dotted #000;border-top:3px dotted #000;border-bottom:3px dotted #000"></div>
<div style="left:3503px;top:561px;width:166px;height:165px;background:#efecd4;"></div>
<div style="left:3665px;top:561px;width:4px;height:161px;background:#a7a898;"></div>
<div style="left:3510px;top:718px;width:159px;height:4px;background:#a7a898;"></div>
<div style="left:3503px;top:722px;width:166px;height:4px;background:#fff;"></div>
<div style="left:3520px;top:574px;width:135px;height:134px;background:#fff;"></div>
<div style="left:3523px;top:577px;width:125px;height:126px;background:#1c20fc;"></div>
<svg style="left:3523px;top:577px" width="125" height="126" viewBox="0 0 125 126"><path d="M11 36 H33 V18 L77 63 L33 108 V90 H11 Z" fill="#f81828"/><ellipse cx="100" cy="63" rx="12" ry="46" fill="#f2f860"/></svg>
<svg style="left:3478px;top:626px" width="28" height="32" viewBox="0 0 28 32"><path d="M3 3 L25 16 L3 29 Z" fill="#f0f040" stroke="#000" stroke-width="4"/></svg>
<div style="transform:scaleX(0.8957);left:3540.00px;top:735.35px;font-family:'Liberation Sans',sans-serif;font-size:39.75px;line-height:39.75px;font-weight:normal;color:#8ef4c4;white-space:pre;transform-origin:0 0;">target</div>
<div style="left:243px;top:814px;width:2312px;height:1650px;background:#0a48e8;"></div>
<div style="left:2544px;top:834px;width:4px;height:1623px;background:#0a30f8;"></div>
<div style="left:2548px;top:834px;width:3px;height:1626px;background:#0018a0;"></div>
<div style="left:2551px;top:834px;width:4px;height:1630px;background:#000c70;"></div>
<div style="left:243px;top:2454px;width:2312px;height:3px;background:#0a40f0;"></div>
<div style="left:243px;top:2457px;width:2312px;height:3px;background:#0018a0;"></div>
<div style="left:243px;top:2460px;width:2312px;height:4px;background:#000c70;"></div>
<div style="left:243px;top:814px;width:14px;height:14px;background:#6f7686;"></div>
<div style="left:2541px;top:814px;width:14px;height:14px;background:#6f7686;"></div>
<div style="left:243px;top:814px;width:2312px;height:100px;border-radius:16px 16px 0 0;background:linear-gradient(to bottom,#0848f0 0px,#0848f0 3px,#58aaf0 3px,#4498f0 10px,#2268f0 10px,#1a5cf0 17px,#0844f8 17px,#0844f8 64px,#1050f8 72px,#1c60f8 76px,#1c60f8 92px,#1454f0 93px,#0034f0 94px,#0020e8 100px)"></div>
<div style="left:243px;top:830px;width:4px;height:84px;background:#0838d8;"></div>
<div style="left:2551px;top:834px;width:4px;height:80px;background:#0a2ab0;"></div>
<div style="left:260px;top:838px;width:56px;height:55px;background:#fff;"></div>
<svg style="left:262px;top:840px" width="52" height="52" viewBox="0 0 16 16"><path d="M8 1 L15 8 L8 15 L1 8 Z" fill="none" stroke="#a8acb0" stroke-width="1.2"/><path d="M8 3 L13 8 L8 13 L3 8 Z" fill="none" stroke="#4010c0" stroke-width="1.6"/><path d="M8 5.5 L10.5 8 L8 10.5 L5.5 8 Z" fill="#4010c0"/><path d="M7 2 L5 4 M11 12 L9 14" stroke="#10104a" stroke-width="1"/></svg>
<div style="transform:scaleX(0.9749);left:330.00px;top:846.94px;font-family:'Liberation Mono',monospace;font-size:47.06px;line-height:47.06px;font-weight:bold;color:#fff;white-space:pre;transform-origin:0 0;text-shadow:4px 3px 0 #0a1a60;">Viewer</div>
<div style="left:2305px;top:831px;width:73px;height:73px;border:4px solid #fff;border-radius:8px;background:radial-gradient(circle at 22% 18%,#9cc0fa 0%,#4a86f6 35%,#2a66f4 70%,#0c46e4 100%)"></div>
<div style="left:2323px;top:875px;width:24px;height:12px;background:#fff;"></div>
<div style="left:2385px;top:831px;width:73px;height:73px;border:4px solid #8ab4f0;border-radius:8px;background:linear-gradient(135deg,#2a6af6,#0a48f0 60%,#0838e0)"></div>
<div style="left:2401px;top:849px;width:38px;height:38px;border:4px solid #8aaaf0;border-top-width:10px"></div>
<div style="left:2465px;top:831px;width:73px;height:73px;border:4px solid #fff;border-radius:8px;background:radial-gradient(circle at 22% 18%,#f9a0a8 0%,#ef4a50 35%,#e8281c 70%,#b81008 100%)"></div>
<svg style="left:2465px;top:831px" width="73" height="73" viewBox="0 0 72 72"><path d="M20 20 L48 48 M48 20 L20 48" stroke="#fff" stroke-width="6.5" stroke-linecap="square" fill="none" style="shape-rendering:auto"/></svg>
<div style="left:254px;top:914px;width:2290px;height:1540px;background:#efecd4;"></div>
<div style="left:243px;top:914px;width:4px;height:1550px;background:#0a30e8;"></div>
<div style="left:247px;top:914px;width:7px;height:1540px;background:#1a5af6;"></div>
<div style="left:254px;top:914px;width:972px;height:1540px;background:#fff;"></div>
<div style="left:254px;top:914px;width:968px;height:1536px;background:#f1efe2;"></div>
<div style="left:254px;top:914px;width:968px;height:3px;background:#a7a898;"></div>
<div style="left:254px;top:914px;width:3px;height:1536px;background:#a7a898;"></div>
<div style="left:257px;top:917px;width:962px;height:1530px;background:#fff;"></div>
<div style="left:257px;top:917px;width:962px;height:4px;background:#5f625a;"></div>
<div style="left:257px;top:917px;width:3px;height:1530px;background:#5f625a;"></div>
<div style="left:260px;top:921px;width:955px;height:1522px;background:#a7a898;"></div>
<div style="left:264px;top:924px;width:948px;height:1516px;background:#efecd4;"></div>
<div style="left:264px;top:924px;width:938px;height:173px;background:#fff;"></div>
<div style="left:264px;top:1097px;width:938px;height:4px;background:#f6f4ea;"></div>
<div style="left:264px;top:924px;width:3px;height:1516px;background:#fff;"></div>
<svg style="left:276px;top:945px" width="111" height="114" viewBox="0 0 111 114"><polygon points="55.5,2.0 61.4,27.6 76.5,6.2 72.2,32.1 94.4,18.1 80.4,40.3 106.3,36.0 84.9,51.1 110.5,57.0 84.9,62.9 106.3,78.0 80.4,73.7 94.4,95.9 72.2,81.9 76.5,107.8 61.4,86.4 55.5,112.0 49.6,86.4 34.5,107.8 38.8,81.9 16.6,95.9 30.6,73.7 4.7,78.0 26.1,62.9 0.5,57.0 26.1,51.1 4.7,36.0 30.6,40.3 16.6,18.1 38.8,32.1 34.5,6.2 49.6,27.6" fill="#f85a3a"/><polygon points="55.5,17.0 60.8,30.5 70.8,20.0 70.5,34.6 83.8,28.7 77.9,42.0 92.5,41.7 82.0,51.7 95.5,57.0 82.0,62.3 92.5,72.3 77.9,72.0 83.8,85.3 70.5,79.4 70.8,94.0 60.8,83.5 55.5,97.0 50.2,83.5 40.2,94.0 40.5,79.4 27.2,85.3 33.1,72.0 18.5,72.3 29.0,62.3 15.5,57.0 29.0,51.7 18.5,41.7 33.1,42.0 27.2,28.7 40.5,34.6 40.2,20.0 50.2,30.5" fill="#f89a38"/>
<circle cx="55.5" cy="57" r="25" fill="#f8d030"/><circle cx="55.5" cy="57" r="19" fill="#f4f43a"/><circle cx="55.5" cy="57" r="14" fill="#3a5aa8"/><circle cx="55.5" cy="57" r="10" fill="#2a60e8"/><circle cx="56.5" cy="57" r="5.5" fill="#a8f0e0"/></svg>
<div style="left:388px;top:1000px;width:814px;height:3px;background:#ff90c0;"></div>
<div style="left:388px;top:1003px;width:814px;height:5px;background:#ff2040;"></div>
<div style="left:388px;top:1008px;width:814px;height:3px;background:#ff70a0;"></div>
<div style="transform:scaleX(0.9459);left:490.05px;top:960.39px;font-family:'Liberation Sans',sans-serif;font-size:29.07px;line-height:29.07px;font-weight:bold;color:#e2e4e2;white-space:pre;transform-origin:0 0;">Fiber Laser Simulation Software</div>
<div style="transform:scaleX(0.9459);left:481.05px;top:950.39px;font-family:'Liberation Sans',sans-serif;font-size:29.07px;line-height:29.07px;font-weight:bold;color:#000;white-space:pre;transform-origin:0 0;">Fiber Laser Simulation Software</div>
<div style="transform:scaleX(0.9276);left:402.00px;top:1033.54px;font-family:'Liberation Sans',sans-serif;font-size:40.70px;line-height:40.70px;font-weight:bold;color:#e4e6e4;white-space:pre;transform-origin:0 0;font-style:italic;">Ignite The World!</div>
<div style="transform:scaleX(0.9276);left:392.00px;top:1021.54px;font-family:'Liberation Sans',sans-serif;font-size:40.70px;line-height:40.70px;font-weight:bold;color:#000;white-space:pre;transform-origin:0 0;font-style:italic;">Ignite The World!</div>
<svg style="left:918px;top:976px" width="252" height="77" viewBox="918 976 252 77"><g fill="#0020c8">
<path d="M918 976 H955 V1027 H980 V1052 H939 L918 1032 Z"/><path d="M980 990 L989 976 H1015 V1052 H980 Z"/>
<path d="M1015 976 H1101 L1109 984 V993 H1015 Z"/><path d="M1090 993 H1139 V1052 H1109 L1092 1032 Z"/>
<path d="M1109 976 H1170 V993 H1109 Z"/><path d="M1109 1028 H1170 V1052 H1109 Z"/>
<path d="M1015 993 H1090 V1030 L1101 1052 H1059 L1043 1038 L1015 1017 Z"/></g>
<path d="M998 1004.6 L1015 989.6 H1074 L1090 1004.6 L1042.6 1038 Z" fill="#a848f0"/><path d="M998 1004.6 L1015 989.6 H1045 L1032 1004.6 Z" fill="#e0a8f8"/><path d="M1060 989.6 H1074 L1090 1004.6 L1042.6 1038 L1062 1004.6 Z" fill="#8a30f0"/></svg>
<div style="left:1170px;top:1000px;width:32px;height:3px;background:#ff90c0;"></div>
<div style="left:1170px;top:1003px;width:32px;height:5px;background:#ff2040;"></div>
<div style="left:1170px;top:1008px;width:32px;height:3px;background:#ff70a0;"></div>
<div style="left:267px;top:1118px;width:942px;height:4px;background:#fff;"></div>
<div style="left:267px;top:1118px;width:4px;height:1318px;background:#fff;"></div>
<div style="left:271px;top:1122px;width:934px;height:3px;background:#f6f4ea;"></div>
<div style="left:271px;top:1122px;width:3px;height:1311px;background:#f6f4ea;"></div>
<div style="left:1205px;top:1118px;width:4px;height:1249px;background:#a7a898;"></div>
<div style="left:1209px;top:1118px;width:3px;height:1253px;background:#5f625a;"></div>
<div style="left:281px;top:1132px;width:916px;height:4px;background:#a7a898;"></div>
<div style="left:281px;top:1132px;width:4px;height:1228px;background:#a7a898;"></div>
<div style="left:1195px;top:1136px;width:3px;height:1228px;background:#fff;"></div>
<div style="left:285px;top:2360px;width:913px;height:4px;background:#fff;"></div>
<div style="left:590px;top:2364px;width:619px;height:3px;background:#a7a898;"></div>
<div style="left:590px;top:2367px;width:622px;height:4px;background:#5f625a;"></div>
<div style="left:586px;top:2364px;width:4px;height:76px;background:#5f625a;"></div>
<div style="left:583px;top:2367px;width:3px;height:69px;background:#a7a898;"></div>
<div style="left:274px;top:2433px;width:312px;height:3px;background:#a7a898;"></div>
<div style="left:271px;top:2436px;width:319px;height:4px;background:#5f625a;"></div>
<div style="transform:scaleX(0.8831);left:289.58px;top:2386.94px;font-family:'Liberation Mono',monospace;font-size:47.06px;line-height:47.06px;font-weight:normal;color:#000;white-space:pre;transform-origin:0 0;">Laser Chain</div>
<div style="left:465px;top:1187px;width:581px;height:87px;background:#fff;"></div>
<div style="left:1042px;top:1187px;width:4px;height:87px;background:#5f625a;"></div>
<div style="left:465px;top:1270px;width:581px;height:4px;background:#5f625a;"></div>
<div style="left:469px;top:1191px;width:573px;height:79px;background:#efecd4;"></div>
<div style="left:1038px;top:1191px;width:4px;height:79px;background:#a7a898;"></div>
<div style="left:469px;top:1266px;width:573px;height:4px;background:#a7a898;"></div>
<div style="transform:scaleX(0.8133);left:546.37px;top:1213.43px;font-family:'Liberation Mono',monospace;font-size:42.51px;line-height:42.51px;font-weight:bold;color:#000;white-space:pre;transform-origin:0 0;">Beam Spatial Profile</div>
<div style="left:465px;top:1298px;width:581px;height:87px;background:#fff;"></div>
<div style="left:1042px;top:1298px;width:4px;height:87px;background:#5f625a;"></div>
<div style="left:465px;top:1381px;width:581px;height:4px;background:#5f625a;"></div>
<div style="left:469px;top:1302px;width:573px;height:79px;background:#efecd4;"></div>
<div style="left:1038px;top:1302px;width:4px;height:79px;background:#a7a898;"></div>
<div style="left:469px;top:1377px;width:573px;height:4px;background:#a7a898;"></div>
<div style="transform:scaleX(0.8148);left:556.37px;top:1324.43px;font-family:'Liberation Mono',monospace;font-size:42.51px;line-height:42.51px;font-weight:bold;color:#000;white-space:pre;transform-origin:0 0;">Pulse Power Envelop</div>
<div style="left:465px;top:1409px;width:581px;height:87px;background:#000;"></div>
<div style="left:469px;top:1413px;width:573px;height:79px;background:#fff;"></div>
<div style="left:469px;top:1413px;width:573px;height:79px;background:#5f625a;clip-path:polygon(100% 0,100% 100%,0 100%,0 95%,99.3% 95%,99.3% 0)"></div>
<div style="left:473px;top:1417px;width:565px;height:71px;background:#efecd4;"></div>
<div style="left:1034px;top:1417px;width:4px;height:71px;background:#a7a898;"></div>
<div style="left:473px;top:1484px;width:565px;height:4px;background:#a7a898;"></div>
<div style="left:478px;top:1423px;width:553px;height:57px;border:3px dotted #000"></div>
<div style="transform:scaleX(0.8190);left:522.72px;top:1435.43px;font-family:'Liberation Mono',monospace;font-size:42.51px;line-height:42.51px;font-weight:bold;color:#000;white-space:pre;transform-origin:0 0;">Laser Spectral Profile</div>
<div style="left:1240px;top:935px;width:1288px;height:1505px;background:#efecd4;"></div>
<div style="left:1240px;top:935px;width:1288px;height:3px;background:#a7a898;"></div>
<div style="left:1240px;top:935px;width:3px;height:1505px;background:#a7a898;"></div>
<div style="left:1243px;top:938px;width:1279px;height:4px;background:#5f625a;"></div>
<div style="left:1243px;top:938px;width:4px;height:1495px;background:#5f625a;"></div>
<div style="left:1247px;top:942px;width:1270px;height:7px;background:#a7a898;"></div>
<div style="left:1247px;top:942px;width:7px;height:1484px;background:#a7a898;"></div>
<div style="left:2517px;top:942px;width:5px;height:1491px;background:#fff;"></div>
<div style="left:1247px;top:2426px;width:1275px;height:7px;background:#fff;"></div>
<div style="left:1240px;top:2436px;width:1288px;height:4px;background:#fff;"></div>
<div style="left:2524px;top:935px;width:4px;height:1505px;background:#fff;"></div>
<div style="left:1254px;top:949px;width:1263px;height:1477px;background:#0a0c0c;"></div>
<div style="left:1471px;top:1067px;width:4px;height:1189px;background:repeating-linear-gradient(to bottom,#7a8090 0px,#7a8090 10px,transparent 10px,transparent 20.6px)"></div>
<div style="left:1703px;top:1067px;width:4px;height:1189px;background:repeating-linear-gradient(to bottom,#7a8090 0px,#7a8090 10px,transparent 10px,transparent 20.6px)"></div>
<div style="left:1935px;top:1067px;width:4px;height:1189px;background:repeating-linear-gradient(to bottom,#7a8090 0px,#7a8090 10px,transparent 10px,transparent 20.6px)"></div>
<div style="left:2167px;top:1067px;width:4px;height:1189px;background:repeating-linear-gradient(to bottom,#7a8090 0px,#7a8090 10px,transparent 10px,transparent 20.6px)"></div>
<div style="left:2398px;top:1067px;width:4px;height:1189px;background:repeating-linear-gradient(to bottom,#7a8090 0px,#7a8090 10px,transparent 10px,transparent 20.6px)"></div>
<div style="left:1382px;top:1125px;width:6px;height:1134px;background:#fff;"></div>
<div style="left:1382px;top:2253px;width:1107px;height:6px;background:#fff;"></div>
<div style="left:1371px;top:2256px;width:1118px;height:3px;background:repeating-linear-gradient(to right,#7a8090 0px,#7a8090 10px,transparent 10px,transparent 20.6px)"></div>
<div style="left:1414px;top:2259px;width:3px;height:9px;background:#7a8090;"></div>
<div style="left:1472px;top:2259px;width:3px;height:9px;background:#7a8090;"></div>
<div style="left:1530px;top:2259px;width:3px;height:9px;background:#7a8090;"></div>
<div style="left:1588px;top:2259px;width:3px;height:9px;background:#7a8090;"></div>
<div style="left:1646px;top:2259px;width:3px;height:9px;background:#7a8090;"></div>
<div style="left:1704px;top:2259px;width:3px;height:9px;background:#7a8090;"></div>
<div style="left:1762px;top:2259px;width:3px;height:9px;background:#7a8090;"></div>
<div style="left:1820px;top:2259px;width:3px;height:9px;background:#7a8090;"></div>
<div style="left:1878px;top:2259px;width:3px;height:9px;background:#7a8090;"></div>
<div style="left:1936px;top:2259px;width:3px;height:9px;background:#7a8090;"></div>
<div style="left:1994px;top:2259px;width:3px;height:9px;background:#7a8090;"></div>
<div style="left:2052px;top:2259px;width:3px;height:9px;background:#7a8090;"></div>
<div style="left:2110px;top:2259px;width:3px;height:9px;background:#7a8090;"></div>
<div style="left:2168px;top:2259px;width:3px;height:9px;background:#7a8090;"></div>
<div style="left:2226px;top:2259px;width:3px;height:9px;background:#7a8090;"></div>
<div style="left:2284px;top:2259px;width:3px;height:9px;background:#7a8090;"></div>
<div style="left:2342px;top:2259px;width:3px;height:9px;background:#7a8090;"></div>
<div style="left:2400px;top:2259px;width:3px;height:9px;background:#7a8090;"></div>
<div style="left:2458px;top:2259px;width:3px;height:9px;background:#7a8090;"></div>
<div style="left:1471px;top:2259px;width:4px;height:17px;background:#7a8090;"></div>
<div style="left:1703px;top:2259px;width:4px;height:17px;background:#7a8090;"></div>
<div style="left:1935px;top:2259px;width:4px;height:17px;background:#7a8090;"></div>
<div style="left:2167px;top:2259px;width:4px;height:17px;background:#7a8090;"></div>
<div style="left:2398px;top:2259px;width:4px;height:17px;background:#7a8090;"></div>
<div style="left:1928px;top:1125px;width:4px;height:205px;background:#2030f0;"></div>
<div style="left:1928px;top:1314px;width:5px;height:94px;background:#2838ff;"></div>
<div style="left:1925px;top:1408px;width:3px;height:612px;background:#2030f0;"></div>
<div style="left:1932px;top:1408px;width:3px;height:284px;background:#2030f0;"></div>
<div style="left:1935px;top:1692px;width:3px;height:378px;background:#2030f0;"></div>
<div style="left:1921px;top:2020px;width:3px;height:236px;background:#2030f0;"></div>
<div style="left:1938px;top:2070px;width:3px;height:186px;background:#2030f0;"></div>
<div style="transform:scaleX(1.1765);left:1340.82px;top:2237.03px;font-family:'Liberation Serif',serif;font-size:38.18px;line-height:38.18px;font-weight:normal;color:#fff;white-space:pre;transform-origin:0 0;">0</div>
<div style="transform:scaleX(1.0887);left:1397.73px;top:2282.03px;font-family:'Liberation Serif',serif;font-size:38.18px;line-height:38.18px;font-weight:normal;color:#fff;white-space:pre;transform-origin:0 0;">1,052.98</div>
<div style="transform:scaleX(1.0887);left:1628.73px;top:2282.03px;font-family:'Liberation Serif',serif;font-size:38.18px;line-height:38.18px;font-weight:normal;color:#fff;white-space:pre;transform-origin:0 0;">1,052.99</div>
<div style="transform:scaleX(1.0880);left:1884.74px;top:2282.03px;font-family:'Liberation Serif',serif;font-size:38.18px;line-height:38.18px;font-weight:normal;color:#fff;white-space:pre;transform-origin:0 0;">1,053</div>
<div style="transform:scaleX(1.0738);left:2092.78px;top:2282.03px;font-family:'Liberation Serif',serif;font-size:38.18px;line-height:38.18px;font-weight:normal;color:#fff;white-space:pre;transform-origin:0 0;">1,053.01</div>
<div style="transform:scaleX(1.0971);left:2323.71px;top:2282.03px;font-family:'Liberation Serif',serif;font-size:38.18px;line-height:38.18px;font-weight:normal;color:#fff;white-space:pre;transform-origin:0 0;">1,053.02</div>
<div style="transform:scaleX(1.0403);left:1801.00px;top:2333.03px;font-family:'Liberation Serif',serif;font-size:38.18px;line-height:38.18px;font-weight:normal;color:#fff;white-space:pre;transform-origin:0 0;">wavelength / nm</div>
<div style="left:0;top:1744.5px;width:10px;height:10px;transform-origin:0 0;transform:rotate(-90deg)">
<div style="transform:scaleX(0.9172);left:-0.92px;top:1286.91px;font-family:'Liberation Serif',serif;font-size:44.29px;line-height:44.29px;font-weight:normal;color:#fff;white-space:pre;transform-origin:0 0;">P / a.u.</div>
</div>
<div style="left:797px;top:2464px;width:439px;height:90px;background:#000;"></div>
<div style="left:797px;top:2464px;width:435px;height:86px;background:#c8ccc8;"></div>
<div style="left:800px;top:2468px;width:428px;height:3px;background:#fff;"></div>
<div style="left:800px;top:2468px;width:4px;height:78px;background:#fff;"></div>
<div style="left:800px;top:2542px;width:428px;height:4px;background:#a0a4a0;"></div>
<div style="left:1224px;top:2468px;width:4px;height:78px;background:#a0a4a0;"></div>
<div style="left:811px;top:2540px;width:418px;height:4px;background:#000;"></div>
<div style="left:811px;top:2475px;width:66px;height:65px;background:#c0c4c0;"></div>
<div style="left:811px;top:2475px;width:66px;height:3px;background:#fff;"></div>
<div style="left:811px;top:2475px;width:3px;height:65px;background:#fff;"></div>
<div style="left:874px;top:2478px;width:3px;height:62px;background:#787c88;"></div>
<div style="left:814px;top:2537px;width:63px;height:3px;background:#787c88;"></div>
<div style="left:877px;top:2475px;width:3px;height:69px;background:#000;"></div>
<div style="left:880px;top:2475px;width:137px;height:65px;background:#c0c4c0;"></div>
<div style="left:880px;top:2475px;width:137px;height:3px;background:#fff;"></div>
<div style="left:880px;top:2475px;width:3px;height:65px;background:#fff;"></div>
<div style="left:1014px;top:2478px;width:3px;height:62px;background:#787c88;"></div>
<div style="left:883px;top:2537px;width:134px;height:3px;background:#787c88;"></div>
<div style="left:1017px;top:2475px;width:3px;height:69px;background:#000;"></div>
<div style="left:1018px;top:2475px;width:67px;height:65px;background:#c0c4c0;"></div>
<div style="left:1018px;top:2475px;width:67px;height:3px;background:#fff;"></div>
<div style="left:1018px;top:2475px;width:3px;height:65px;background:#fff;"></div>
<div style="left:1082px;top:2478px;width:3px;height:62px;background:#787c88;"></div>
<div style="left:1021px;top:2537px;width:64px;height:3px;background:#787c88;"></div>
<div style="left:1085px;top:2475px;width:3px;height:69px;background:#000;"></div>
<div style="left:1087px;top:2475px;width:68px;height:65px;background:#c0c4c0;"></div>
<div style="left:1087px;top:2475px;width:68px;height:3px;background:#fff;"></div>
<div style="left:1087px;top:2475px;width:3px;height:65px;background:#fff;"></div>
<div style="left:1152px;top:2478px;width:3px;height:62px;background:#787c88;"></div>
<div style="left:1090px;top:2537px;width:65px;height:3px;background:#787c88;"></div>
<div style="left:1155px;top:2475px;width:3px;height:69px;background:#000;"></div>
<div style="left:1157px;top:2475px;width:68px;height:65px;background:#c0c4c0;"></div>
<div style="left:1157px;top:2475px;width:68px;height:3px;background:#fff;"></div>
<div style="left:1157px;top:2475px;width:3px;height:65px;background:#fff;"></div>
<div style="left:1222px;top:2478px;width:3px;height:62px;background:#787c88;"></div>
<div style="left:1160px;top:2537px;width:65px;height:3px;background:#787c88;"></div>
<div style="left:1225px;top:2475px;width:3px;height:69px;background:#000;"></div>
<svg style="left:816px;top:2480px" width="58" height="56" viewBox="0 0 58 56">
<path d="M4 34 V14 Q4 4 14 4 Q24 4 24 14 V22 M22 14 Q22 4 34 4 Q46 4 46 14 V30 H28 V14" fill="none" stroke="#000" stroke-width="6"/>
<path d="M4 34 V14 Q4 4 14 4 Q24 4 24 14 V22 M22 14 Q22 4 34 4 Q46 4 46 14 V30 H28 V14" fill="none" stroke="#f0f040" stroke-width="3"/>
<path d="M2 52 L14 20 H20 V52 M6 40 H20" fill="none" stroke="#1c30e8" stroke-width="5"/>
<path d="M52 30 H36 V50 H52 M30 28 L48 20" fill="none" stroke="#f02020" stroke-width="4"/></svg>
<svg style="left:880px;top:2475px" width="137" height="65" viewBox="880 2475 137 65"><g fill="#000">
<rect x="904.6" y="2481" width="3.2" height="56"/><rect x="893.6" y="2494.8" width="20" height="3.6"/>
<path d="M904.6 2501 L906 2503 L895.5 2519.5 L892.5 2518 Z"/><rect x="910.6" y="2507.8" width="3" height="6"/>
<rect x="914.5" y="2486.9" width="24" height="3.6"/><rect x="910.6" y="2502.6" width="35" height="3.4"/>
<rect x="920.5" y="2505.8" width="3.8" height="31"/><rect x="917.5" y="2533.5" width="6" height="3.5"/>
<path d="M912 2515 L915 2514 L920 2524 L917 2526 Z"/><path d="M932 2514 L935 2513 L942 2524 L939 2526 Z"/>
<path d="M952 2484 L955 2483 L961 2491 L958 2493 Z"/><path d="M949 2520 L959 2509 L961 2511 L951 2523 Z"/>
<rect x="955.4" y="2495.8" width="3.8" height="37"/><path d="M956 2496 L965.5 2480.5 L968.5 2482 L959 2498 Z"/>
<rect x="970.4" y="2480.9" width="3.8" height="56"/><rect x="980.3" y="2480.9" width="3.8" height="6"/>
<rect x="970.4" y="2488.5" width="31" height="3.4"/><rect x="970.4" y="2502" width="28" height="3.4"/><rect x="970.4" y="2514" width="28" height="3.4"/><rect x="970.4" y="2527" width="31" height="3.4"/>
</g></svg>
<svg style="left:1030px;top:2486px" width="42" height="46" viewBox="0 0 42 46"><path d="M28 2 Q44 22 28 42 Q18 46 2 32 Q22 32 28 2 Z" fill="#000"/></svg>
<div style="left:1104px;top:2502px;width:9px;height:9px;background:#000;"></div>
<div style="left:1107px;top:2505px;width:3px;height:3px;background:#fff;"></div>
<div style="left:1124px;top:2502px;width:10px;height:12px;background:#000;"></div>
<div style="left:1128px;top:2505px;width:3px;height:3px;background:#fff;"></div>
<div style="left:1129px;top:2514px;width:4px;height:8px;background:#000;"></div>
<div style="left:1108px;top:2511px;width:8px;height:3px;background:#fff;"></div>
<div style="left:1134px;top:2508px;width:3px;height:11px;background:#fff;"></div>
<div style="left:1128px;top:2522px;width:3px;height:4px;background:#fff;"></div>
<div style="left:1160px;top:2489px;width:60px;height:42px;background:#787c88;"></div>
<div style="left:1160px;top:2489px;width:60px;height:3px;background:#fff;"></div>
<div style="left:1164px;top:2494px;width:10px;height:6px;background:#fff;"></div>
<div style="left:1178px;top:2494px;width:10px;height:6px;background:#fff;"></div>
<div style="left:1192px;top:2494px;width:10px;height:6px;background:#fff;"></div>
<div style="left:1206px;top:2494px;width:10px;height:6px;background:#fff;"></div>
<div style="left:1164px;top:2504px;width:7px;height:6px;background:#fff;"></div>
<div style="left:1175px;top:2504px;width:7px;height:6px;background:#fff;"></div>
<div style="left:1186px;top:2504px;width:7px;height:6px;background:#fff;"></div>
<div style="left:1197px;top:2504px;width:7px;height:6px;background:#fff;"></div>
<div style="left:1208px;top:2504px;width:7px;height:6px;background:#fff;"></div>
<div style="left:1164px;top:2514px;width:14px;height:6px;background:#fff;"></div>
<div style="left:1182px;top:2514px;width:18px;height:6px;background:#fff;"></div>
<div style="left:1204px;top:2514px;width:12px;height:6px;background:#fff;"></div>
<div style="left:1160px;top:2524px;width:60px;height:3px;background:#c0c4c0;"></div>
</body></html>
